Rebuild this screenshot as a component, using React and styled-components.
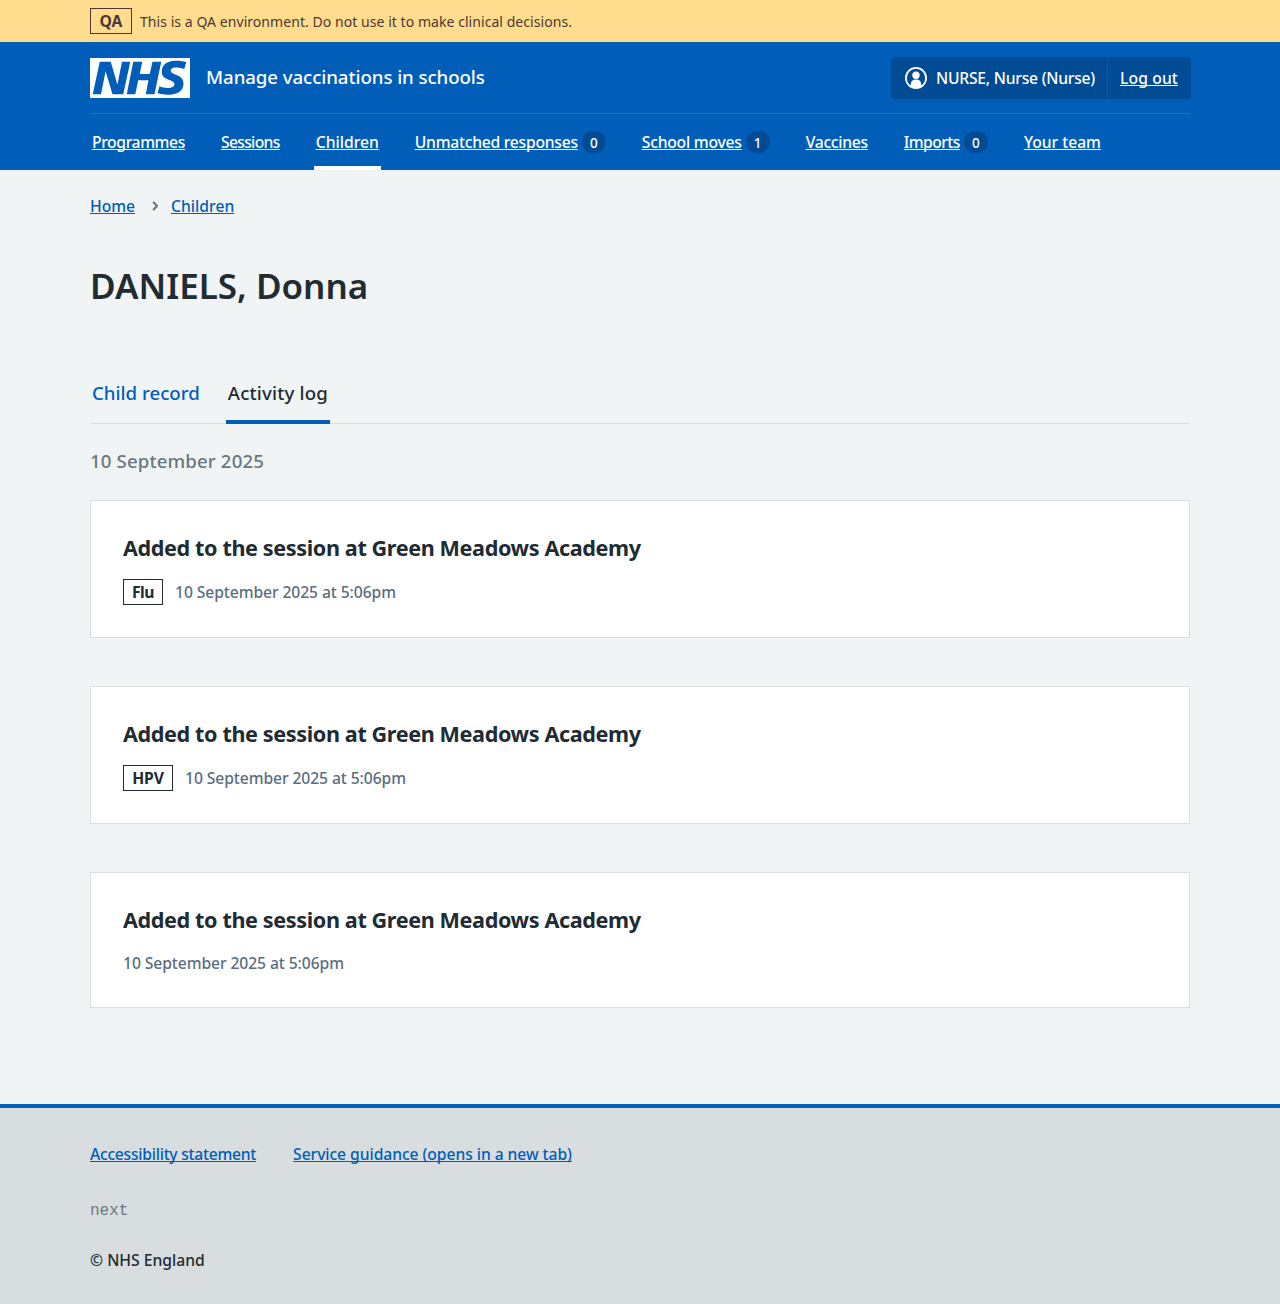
import React from "react";
import styled, { createGlobalStyle, css } from "styled-components";

const blue = "#005eb8";
const darkBlue = "#004b93";
const ink = "#212b32";

const Global = createGlobalStyle`
  *, *::before, *::after { box-sizing: border-box; }
  body {
    margin: 0;
    background: #f0f4f5;
    color: ${ink};
    font-family: "Noto Sans", "Open Sans", sans-serif;
    font-size: 15.7px;
    font-weight: 500;
    line-height: 24px;
  }
`;

const Page = styled.div`
  display: flex;
  flex-direction: column;
  min-height: 1304px;
`;

const Container = styled.div`
  width: 1100px;
  margin: 0 auto;
`;

const Text = styled.span`
  white-space: nowrap;
  letter-spacing: ${(p) => p.$track || 0}px;
`;

const Link = styled.a`
  color: ${(p) => (p.$light ? "#fff" : blue)};
  white-space: nowrap;
  text-decoration: underline;
  text-decoration-thickness: 1px;
  text-underline-offset: 1px;
  text-decoration-skip-ink: none;
  letter-spacing: ${(p) => p.$track || 0}px;
`;

const Banner = styled.div`
  height: 42px;
  background: #ffdc8e;
  color: #4d3734;
`;

const BannerRow = styled(Container)`
  display: flex;
  align-items: center;
  gap: 8px;
  height: 42px;
`;

const BannerText = styled(Text)`
  padding-top: 2px;
  font-size: 14px;
  font-weight: 400;
`;

const Tag = styled.strong`
  display: flex;
  align-items: center;
  justify-content: center;
  width: ${(p) => p.$width}px;
  height: 26px;
  border: 1px solid currentColor;
  font-size: 15.7px;
  font-weight: 700;
  letter-spacing: ${(p) => p.$track || 0}px;
`;

const Header = styled.header`
  height: 128px;
  background: ${blue};
  color: #fff;
`;

const HeaderTop = styled(Container)`
  display: flex;
  align-items: center;
  height: 72px;
  border-bottom: 1px solid #266fc0;
`;

const Logo = styled.svg`
  display: block;
  width: 100px;
  height: 40px;
`;

const ServiceName = styled(Text)`
  margin-left: 16px;
  padding-bottom: 2px;
  font-size: 18.65px;
  line-height: 28px;
`;

const Account = styled.div`
  display: flex;
  width: 300px;
  height: 42px;
  margin: 0 -1px 0 auto;
  border-radius: 4px;
  background: ${darkBlue};
`;

const AccountItem = styled.div`
  display: flex;
  flex: ${(p) => (p.$divided ? "1" : "0 0 216px")};
  align-items: center;
  gap: 8px;
  margin: 1px 0;
  padding-left: ${(p) => (p.$divided ? 12 : 13)}px;
  ${(p) => p.$divided && css`border-left: 1px solid ${blue};`}
  svg { display: block; }
`;

const Nav = styled.nav`
  display: flex;
  gap: 32px;
  width: 1100px;
  height: 56px;
  margin: 0 auto;
`;

const NavItem = styled.div`
  display: flex;
  align-items: center;
  gap: 4px;
  padding: 4px 2px 0;
  border-bottom: 4px solid ${(p) => (p.$active ? "#fff" : "transparent")};
`;

const Count = styled.span`
  display: flex;
  align-items: center;
  justify-content: center;
  width: 24px;
  height: 22px;
  padding-top: 1px;
  border-radius: 11px;
  background: ${darkBlue};
  font-size: 13.5px;
`;

const Breadcrumb = styled(Container)`
  display: flex;
  align-items: center;
  height: 24px;
  margin-top: 24px;
`;

const Chevron = styled.svg`
  width: 8px;
  height: 12px;
  margin: 0 12px 0 16px;
`;

const Main = styled.main`
  flex: 1;
  width: 1100px;
  margin: 0 auto;
`;

const Title = styled.h1`
  margin: 44px 0 0;
  font-size: 35px;
  font-weight: 600;
  line-height: 48px;
`;

const Tabs = styled.div`
  display: flex;
  gap: 24px;
  height: 61px;
  margin-top: 53px;
  box-shadow: inset 0 -1px #d8dde0;
`;

const Tab = styled.div`
  padding: 16px 2px 0;
  border-bottom: 4px solid ${(p) => (p.$active ? blue : "transparent")};
  color: ${(p) => (p.$active ? ink : blue)};
  font-size: 18.65px;
  line-height: 28px;
`;

const DateHeading = styled.h2`
  margin: 23px 0 25px;
  color: #6a7680;
  font-size: 18.65px;
  font-weight: 500;
  line-height: 28px;
  letter-spacing: ${(p) => p.$track}px;
`;

const Card = styled.article`
  height: ${(p) => (p.$compact ? 136 : 138)}px;
  margin-bottom: 48px;
  padding: 31px 32px;
  border: 1px solid #d8dde0;
  background: #fff;
`;

const CardTitle = styled.h3`
  margin: 0 0 16px;
  font-size: 21.6px;
  font-weight: 700;
  line-height: 31px;
  letter-spacing: ${(p) => p.$track}px;
`;

const Meta = styled.div`
  display: flex;
  align-items: center;
  gap: 12px;
`;

const Stamp = styled(Text)`
  color: #5a6e7f;
`;

const Footer = styled.footer`
  height: 200px;
  border-top: 4px solid ${blue};
  background: #d8dde0;
`;

const FooterBody = styled(Container)`
  display: flex;
  flex-direction: column;
  padding-top: 34px;
`;

const FooterLinks = styled.div`
  display: flex;
  gap: 37px;
`;

const Version = styled.code`
  margin-top: 33px;
  color: #6f7780;
  font-family: "Liberation Mono", monospace;
  font-size: 16px;
  font-weight: 400;
`;

const Copyright = styled(Text)`
  margin-top: 25px;
`;

const NAV = [
  { label: "Programmes", track: -0.39 },
  { label: "Sessions", track: -0.68 },
  { label: "Children", track: -0.01, active: true },
  { label: "Unmatched responses", track: -0.26, count: 0 },
  { label: "School moves", track: -0.23, count: 1 },
  { label: "Vaccines", track: -0.29 },
  { label: "Imports", track: -0.56, count: 0 },
  { label: "Your team", track: -0.036 },
];

const EVENTS = [
  { tag: "Flu", width: 40, track: -0.5 },
  { tag: "HPV", width: 50, track: -0.1 },
  {},
];

export default function App() {
  return (
    <Page>
      <Global />
      <Banner>
        <BannerRow>
          <Tag $width={42}>QA</Tag>
          <BannerText $track={0.055}>This is a QA environment. Do not use it to make clinical decisions.</BannerText>
        </BannerRow>
      </Banner>
      <Header>
        <HeaderTop>
          <Logo viewBox="0 0 200 80" role="img" aria-label="NHS">
            <path
              fill="#fff"
              d="M200 0v80H0V0h200Zm-27.5 5.5c-14.5 0-29 5-29 22 0 10.2 7.7 13.5 14.7 16.3l.7.3c5.4 2 10.1 3.9 10.1 8.4 0 6.5-8.5 7.5-14 7.5s-12.5-1.5-16-3.5L135 70c5.5 2 13.5 3.5 20 3.5 15.5 0 32-4.5 32-22.5 0-19.5-25.5-16.5-25.5-25.5 0-5.5 5.5-6.5 12.5-6.5a35 35 0 0 1 14.5 3l4-13.5c-4.5-2-12-3-20-3Zm-131 2h-22l-14 65H22l9-45h.5l13.5 45h21.5l14-65H64l-9 45h-.5l-13-45Zm63 0h-18l-13 65h17l6-28H117l-5.5 28H129l13.5-65H125L119.5 32h-20l5-24.5Z"
            />
          </Logo>
          <ServiceName $track={-0.07}>Manage vaccinations in schools</ServiceName>
          <Account>
            <AccountItem>
              <svg width="24" height="24" viewBox="0 0 24 24" fill="#fff" aria-hidden="true">
                <circle cx="12" cy="12" r="10.1" fill="none" stroke="#fff" strokeWidth="1.8" />
                <circle cx="12" cy="9.3" r="3.7" />
                <path d="M6.8 20.5V18a4.6 4.6 0 0 1 4.6-4.6h1.2a4.6 4.6 0 0 1 4.6 4.6v2.5A10 10 0 0 1 12 22a10 10 0 0 1-5.2-1.5Z" />
              </svg>
              <Text $track={-0.24}>NURSE, Nurse (Nurse)</Text>
            </AccountItem>
            <AccountItem $divided>
              <Link $light $track={0.11}>Log out</Link>
            </AccountItem>
          </Account>
        </HeaderTop>
        <Nav>
          {NAV.map((item) => (
            <NavItem key={item.label} $active={item.active}>
              <Link $light $track={item.track}>{item.label}</Link>
              {item.count !== undefined && <Count>{item.count}</Count>}
            </NavItem>
          ))}
        </Nav>
      </Header>
      <Breadcrumb>
        <Link $track={-0.05}>Home</Link>
        <Chevron viewBox="0 0 8 12" fill="none" stroke="#66737d" strokeWidth="2" strokeLinecap="round" strokeLinejoin="round">
          <path d="M2.7 2.5L6 6 2.7 9.5" />
        </Chevron>
        <Link $track={0.02}>Children</Link>
      </Breadcrumb>
      <Main>
        <Title>DANIELS, Donna</Title>
        <Tabs>
          <Tab><Text>Child record</Text></Tab>
          <Tab $active><Text $track={0.16}>Activity log</Text></Tab>
        </Tabs>
        <DateHeading $track={0.13}>10 September 2025</DateHeading>
        {EVENTS.map((event, i) => (
          <Card key={i} $compact={!event.tag}>
            <CardTitle $track={-0.38}>Added to the session at Green Meadows Academy</CardTitle>
            <Meta>
              {event.tag && <Tag $width={event.width} $track={event.track}>{event.tag}</Tag>}
              <Stamp $track={-0.095}>10 September 2025 at 5:06pm</Stamp>
            </Meta>
          </Card>
        ))}
      </Main>
      <Footer>
        <FooterBody>
          <FooterLinks>
            <Link $track={-0.27}>Accessibility statement</Link>
            <Link $track={-0.074}>Service guidance (opens in a new tab)</Link>
          </FooterLinks>
          <Version>next</Version>
          <Copyright $track={0}>© NHS England</Copyright>
        </FooterBody>
      </Footer>
    </Page>
  );
}
